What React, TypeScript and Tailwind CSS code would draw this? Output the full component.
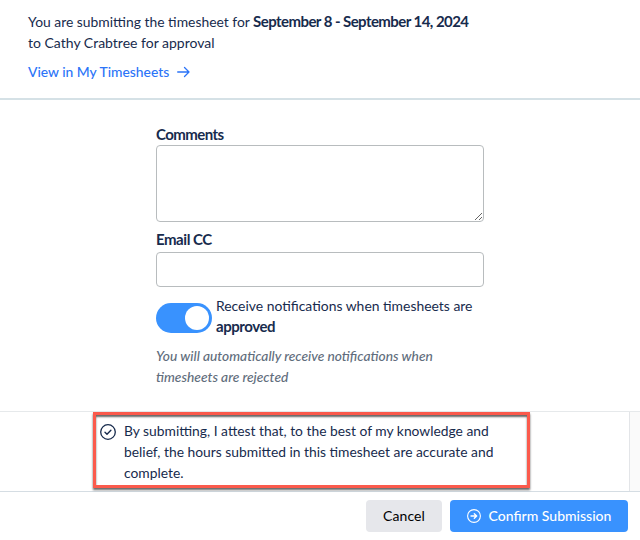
import { useState } from "react";

const ATTESTATION =
  "By submitting, I attest that, to the best of my knowledge and belief, the hours submitted in this timesheet are accurate and complete.";

function ArrowRight() {
  return (
    <svg width="13" height="12" viewBox="0 0 13 12" fill="none" stroke="currentColor" strokeWidth="1.3" aria-hidden>
      <path d="M0.7 6h11.3M7.5 1.5L12 6l-4.5 4.5" strokeLinecap="round" strokeLinejoin="round" />
    </svg>
  );
}

function CircleCheck() {
  return (
    <svg width="16" height="16" viewBox="0 0 16 16" fill="none" stroke="currentColor" aria-hidden>
      <circle cx="8" cy="8" r="7.3" strokeWidth="1.3" />
      <path d="M5 8.3l2 1.9 3.9-3.9" strokeWidth="1.4" strokeLinecap="round" strokeLinejoin="round" />
    </svg>
  );
}

function CircleArrow() {
  return (
    <svg width="14" height="14" viewBox="0 0 14 14" fill="none" stroke="currentColor" aria-hidden>
      <circle cx="7" cy="7" r="6.4" strokeWidth="1.1" />
      <path d="M4 7h5.5M7.3 4.7L9.7 7 7.3 9.3" strokeWidth="1.4" strokeLinecap="round" strokeLinejoin="round" />
    </svg>
  );
}

export default function App() {
  const [notify, setNotify] = useState(true);

  return (
    <div className="flex h-[540px] w-[640px] flex-col overflow-hidden bg-white font-['Lato',sans-serif] text-[14px] leading-[21px] text-[#172b4d]">
      <header className="h-[100px] shrink-0 border-b-2 border-[#d5e1e6] pl-7 pt-[11px]">
        <p className="text-[13.88px]">
          You are submitting the timesheet for{" "}
          <strong className="text-[15px] tracking-[-0.56px]">September 8 - September 14, 2024</strong>
          <br />
          <span className="text-[14px]">to Cathy Crabtree for approval</span>
        </p>
        <a href="#" className="mt-2 flex items-center gap-2 text-[13.85px] font-medium text-[#2b74f8]">
          View in My Timesheets
          <ArrowRight />
        </a>
      </header>

      <main className="flex h-[311px] shrink-0 flex-col pl-[156px] pt-6">
        <label htmlFor="comments" className="text-[15px] font-bold tracking-[-0.56px]">
          Comments
        </label>
        <textarea
          id="comments"
          className="block h-[77px] w-[328px] shrink-0 rounded border border-[#b8bcbe] bg-white"
        />
        <label htmlFor="cc" className="mt-[7px] text-[15px] font-bold tracking-[-0.45px]">
          Email CC
        </label>
        <input id="cc" className="mt-0.5 h-[35px] w-[328px] shrink-0 rounded border border-[#b8bcbe] bg-white" />

        <div className="mt-2 flex w-[328px] gap-1">
          <button
            type="button"
            role="switch"
            aria-checked={notify}
            aria-label="Receive notifications"
            onClick={() => setNotify(!notify)}
            className={`mt-2 flex h-[30px] w-14 shrink-0 items-center rounded-full px-[3px] ${
              notify ? "justify-end bg-[#3992fe]" : "justify-start bg-gray-300"
            }`}
          >
            <span className="size-6 rounded-full bg-white" />
          </button>
          <p className="text-[13.92px]">
            Receive notifications when timesheets are{" "}
            <strong className="text-[15px] tracking-[-0.45px]">approved</strong>
          </p>
        </div>
        <p className="mt-2 w-[328px] text-[13.77px] font-medium italic text-[#616d7c]">
          You will automatically receive notifications when timesheets are rejected
        </p>
      </main>

      <section className="flex h-[81px] shrink-0 border-y border-b-[#d5dde3] border-t-[#e6e9eb]">
        <div className="relative flex flex-1 items-start gap-2 pl-[100px] pt-2">
          <div className="mt-1 shrink-0">
            <CircleCheck />
          </div>
          <p className="w-[390px] text-[13.83px]">{ATTESTATION}</p>
          {/* highlight frame around the attestation */}
          <div className="pointer-events-none absolute left-[93px] top-0 h-[76px] w-[437px] border-[3px] border-[#fb5a4c] shadow-[0px_2px_2px_rgba(0,0,0,0.6),inset_0px_2px_2px_rgba(0,0,0,0.6)]" />
        </div>
        <div className="w-[11px] border-l border-[#e3e5e8] bg-[#fafafa]" />
      </section>

      <footer className="flex flex-1 items-start justify-end gap-2 pr-3 pt-2">
        <button type="button" className="h-8 w-[76px] rounded bg-[#e6e7eb] pb-0.5 tracking-[0.1px] text-black">
          Cancel
        </button>
        <button
          type="button"
          className="flex h-8 w-[178px] items-center justify-center gap-2 rounded bg-[#3992fe] font-medium text-white"
        >
          <CircleArrow />
          <span className="pb-0.5">Confirm Submission</span>
        </button>
      </footer>
    </div>
  );
}
